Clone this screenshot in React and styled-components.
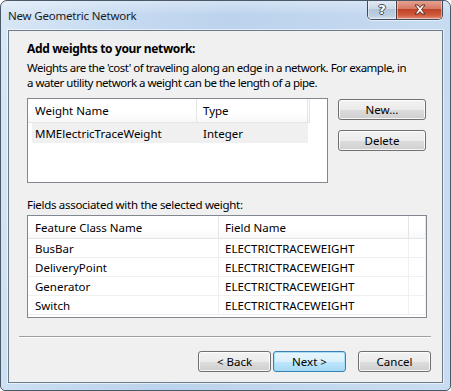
import React from 'react'
import styled, { createGlobalStyle } from 'styled-components'

const GlobalStyle = createGlobalStyle`
  html, body {
    margin: 0;
    padding: 0;
    background: #ffffff;
  }
  body {
    font-family: "Noto Sans", "Segoe UI", sans-serif;
    font-size: 11.5px;
    color: #000;
  }
`

const Window = styled.div`
  width: 451px;
  height: 391px;
  box-sizing: border-box;
  display: flex;
  flex-direction: column;
  border: 1px solid #4a5968;
  border-radius: 7px 7px 5px 5px;
  overflow: hidden;
  background:
    linear-gradient(180deg, rgba(255,255,255,0.35) 0px, rgba(255,255,255,0) 14px),
    linear-gradient(100deg, #d9e7f6 0%, #c7dbf1 22%, #bcd3ed 45%, #c3d8ef 70%, #cadcf1 100%);
`

const TitleBar = styled.div`
  height: 29px;
  display: flex;
  justify-content: space-between;
  align-items: flex-start;
`

const Title = styled.div`
  align-self: center;
  padding-left: 7px;
  margin-top: -1px;
  font-size: 11.5px;
  letter-spacing: -0.2px;
  color: #1b1b1b;
`

const Caption = styled.div`
  display: flex;
  margin-top: -1px;
  margin-right: 7px;
  border: 1px solid #3d4b5a;
  border-top: none;
  border-radius: 0 0 5px 5px;
  overflow: hidden;
  box-shadow: 0 1px 0 rgba(255,255,255,0.6);
`

const CaptionButton = styled.div`
  width: ${p => p.$w}px;
  height: 19px;
  display: flex;
  align-items: center;
  justify-content: center;
  box-sizing: border-box;
  border-left: ${p => (p.$close ? '1px solid #4a3a3a' : 'none')};
  background: ${p =>
    p.$close
      ? 'linear-gradient(180deg, #e6a595 0%, #d67b66 45%, #c04328 50%, #cf5a3b 80%, #e8917a 100%)'
      : 'linear-gradient(180deg, #e3ebf4 0%, #ccd9e8 45%, #b3c5d9 50%, #bccde0 80%, #d4e1ee 100%)'};
  box-shadow: inset 0 0 0 1px rgba(255,255,255,0.45);
`

const HelpGlyph = styled.span`
  font-family: "DejaVu Sans", sans-serif;
  font-weight: bold;
  font-size: 13px;
  line-height: 1;
  color: #ffffff;
  text-shadow: -1px 0 #3b4a5c, 1px 0 #3b4a5c, 0 -1px #3b4a5c, 0 1px #3b4a5c;
`

const Client = styled.div`
  flex: 1;
  margin: 0 7px 7px 7px;
  display: flex;
  flex-direction: column;
  background: #f0f0f0;
  border: 1px solid #6d7c8b;
  box-shadow: 0 0 0 1px rgba(255,255,255,0.55);
`

const Content = styled.div`
  padding: 10px 16px 0 18px;
  display: flex;
  flex-direction: column;
`

const Heading = styled.div`
  font-weight: bold;
  font-size: 12px;
  line-height: 15px;
  letter-spacing: -0.35px;
`

const Text = styled.div`
  line-height: 15px;
  white-space: nowrap;
  letter-spacing: ${p => p.$ls || 0}px;
  margin-top: ${p => p.$mt || 0}px;
`

const WeightsRow = styled.div`
  display: flex;
  align-items: flex-start;
  margin-top: 8px;
`

const ListBox = styled.div`
  width: ${p => p.$w}px;
  height: ${p => p.$h}px;
  box-sizing: border-box;
  border: 1px solid #828790;
  background: #ffffff;
  margin-top: ${p => p.$mt || 0}px;
  overflow: hidden;
`

const Row = styled.div`
  display: grid;
  grid-template-columns: ${p => p.$cols};
  height: ${p => p.$h}px;
`

const HeaderCell = styled.div`
  display: flex;
  align-items: center;
  padding-left: ${p => p.$pl ?? 6}px;
  border-right: 1px solid #e5e5e5;
  border-bottom: 1px solid #e5e5e5;
  background: linear-gradient(180deg, #ffffff 0%, #ffffff 60%, #f7f8f9 100%);
  white-space: nowrap;
`

const HeaderFill = styled.div`
  background: #ffffff;
`

const Cell = styled.div`
  display: flex;
  align-items: center;
  padding-left: ${p => p.$pl ?? 6}px;
  white-space: nowrap;
  border-right: ${p => (p.$grid ? '1px solid #f0f0f0' : 'none')};
  border-bottom: ${p => (p.$grid ? '1px solid #f0f0f0' : 'none')};
`

const SelectedRow = styled.div`
  width: 276px;
  margin-left: 4px;
  display: grid;
  grid-template-columns: 165px 111px;
  height: 20px;
  background: #f0f0f0;
`

const SideButtons = styled.div`
  display: flex;
  flex-direction: column;
  gap: 10px;
  margin-left: 10px;
  margin-top: 1px;
`

const Button = styled.div`
  width: ${p => p.$w}px;
  height: 21px;
  box-sizing: border-box;
  display: flex;
  align-items: center;
  justify-content: center;
  border: 1px solid ${p => (p.$default ? '#3c7fb1' : '#707070')};
  border-radius: 3px;
  background: ${p =>
    p.$default
      ? 'linear-gradient(180deg, #eaf6fd 0%, #d9f0fc 50%, #bee6fd 51%, #a7d9f5 100%)'
      : 'linear-gradient(180deg, #f2f2f2 0%, #ebebeb 50%, #dddddd 51%, #cfcfcf 100%)'};
  box-shadow: inset 0 0 0 1px ${p => (p.$default ? 'rgba(160,220,250,0.9)' : 'rgba(255,255,255,0.8)')};
  line-height: 15px;
  padding-bottom: 1px;
`

const Separator = styled.div`
  margin: 18px 11px 0 10px;
  border-top: 1px solid #a0a0a0;
  border-bottom: 1px solid #ffffff;
`

const Footer = styled.div`
  display: flex;
  justify-content: flex-end;
  padding: 13px 11px 0 0;
`

const Spacer = styled.div`
  width: ${p => p.$w}px;
`

const fields = ['BusBar', 'DeliveryPoint', 'Generator', 'Switch']

const CloseIcon = () => (
  <svg width="14" height="11" viewBox="0 0 14 11">
    <path
      d="M2 1 L5 1 L7 3.5 L9 1 L12 1 L8.6 5.5 L12 10 L9 10 L7 7.5 L5 10 L2 10 L5.4 5.5 Z"
      fill="#ffffff"
      stroke="#5a2a20"
      strokeWidth="1"
      strokeLinejoin="round"
    />
  </svg>
)

export default function App() {
  return (
    <>
      <GlobalStyle />
      <Window>
        <TitleBar>
          <Title>New Geometric Network</Title>
          <Caption>
            <CaptionButton $w={28}>
              <HelpGlyph>?</HelpGlyph>
            </CaptionButton>
            <CaptionButton $w={46} $close>
              <CloseIcon />
            </CaptionButton>
          </Caption>
        </TitleBar>
        <Client>
          <Content>
            <Heading>Add weights to your network:</Heading>
            <Text $mt={4} $ls={-0.5}>
              Weights are the 'cost' of traveling along an edge in a network. For example, in
              <br />
              a water utility network a weight can be the length of a pipe.
            </Text>
            <WeightsRow>
              <ListBox $w={301} $h={85}>
                <Row $cols="169px 111px 2px 1fr" $h={24}>
                  <HeaderCell $pl={7}>Weight Name</HeaderCell>
                  <HeaderCell>Type</HeaderCell>
                  <HeaderCell $pl={0} />
                  <HeaderFill />
                </Row>
                <SelectedRow>
                  <Cell $pl={3}>MMElectricTraceWeight</Cell>
                  <Cell>Integer</Cell>
                </SelectedRow>
              </ListBox>
              <SideButtons>
                <Button $w={88}>New...</Button>
                <Button $w={88}>Delete</Button>
              </SideButtons>
            </WeightsRow>
            <Text $mt={14} $ls={-0.3}>Fields associated with the selected weight:</Text>
            <ListBox $w={400} $h={103} $mt={3}>
              <Row $cols="191px 190px 1fr" $h={23}>
                <HeaderCell $pl={7}>Feature Class Name</HeaderCell>
                <HeaderCell>Field Name</HeaderCell>
                <HeaderCell $pl={0} />
              </Row>
              {fields.map(f => (
                <Row key={f} $cols="191px 190px 1fr" $h={19}>
                  <Cell $pl={7} $grid>{f}</Cell>
                  <Cell $grid>ELECTRICTRACEWEIGHT</Cell>
                  <Cell $pl={0} $grid />
                </Row>
              ))}
            </ListBox>
          </Content>
          <Separator />
          <Footer>
            <Button $w={73}>&lt; Back</Button>
            <Spacer $w={2} />
            <Button $w={73} $default>Next &gt;</Button>
            <Spacer $w={12} />
            <Button $w={73}>Cancel</Button>
          </Footer>
        </Client>
      </Window>
    </>
  )
}
